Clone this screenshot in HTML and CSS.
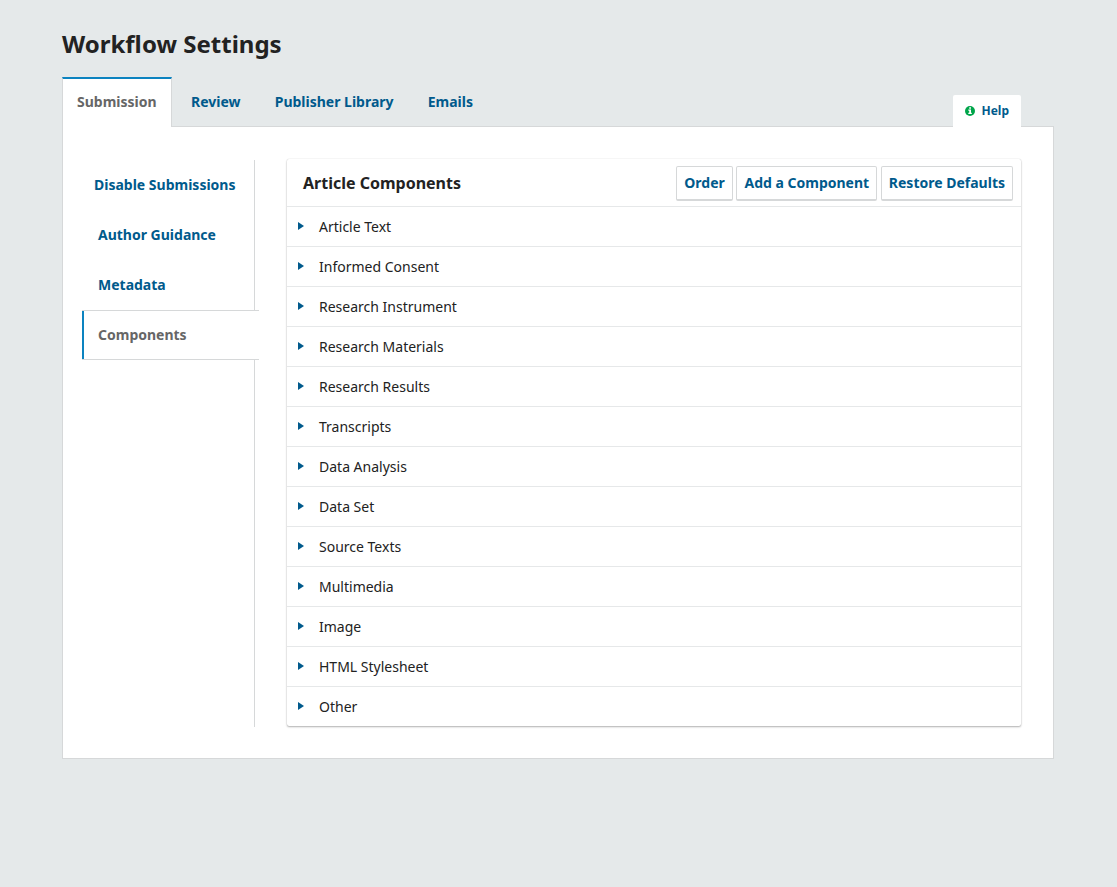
FILE: index.html
```html
<!DOCTYPE html>
<html lang="en">
<head>
<meta charset="utf-8">
<title>Workflow Settings</title>
<link rel="stylesheet" href="styles.css">
</head>
<body>
<main class="page">
  <h1 class="title">Workflow Settings</h1>
  <div class="bar">
    <nav class="tabs">
      <a class="tab tab-active">Submission</a>
      <a class="tab">Review</a>
      <a class="tab">Publisher Library</a>
      <a class="tab">Emails</a>
    </nav>
    <a class="help">
      <svg class="help-icon" viewBox="0 0 10 10"><circle cx="5" cy="5" r="5" fill="#00a54a"/><path d="M4.2 1.2h1.8v1.6H4.2zM3.3 3.6H6v3.2h.8v1.3H3.3V6.800h.9v-2h-.9z" fill="#fff"/></svg>
      <span>Help</span>
    </a>
  </div>
  <div class="panel">
    <nav class="side">
      <a class="side-item side-wide">Disable Submissions</a>
      <a class="side-item">Author Guidance</a>
      <a class="side-item">Metadata</a>
      <a class="side-item side-active">Components</a>
    </nav>
    <section class="card">
      <header class="card-head">
        <h2 class="card-title">Article Components</h2>
        <div class="actions">
          <button class="btn">Order</button>
          <button class="btn">Add a Component</button>
          <button class="btn">Restore Defaults</button>
        </div>
      </header>
      <div class="row"><i class="arrow"></i>Article Text</div>
      <div class="row"><i class="arrow"></i>Informed Consent</div>
      <div class="row"><i class="arrow"></i>Research Instrument</div>
      <div class="row"><i class="arrow"></i>Research Materials</div>
      <div class="row"><i class="arrow"></i>Research Results</div>
      <div class="row"><i class="arrow"></i>Transcripts</div>
      <div class="row"><i class="arrow"></i>Data Analysis</div>
      <div class="row"><i class="arrow"></i>Data Set</div>
      <div class="row"><i class="arrow"></i>Source Texts</div>
      <div class="row"><i class="arrow"></i>Multimedia</div>
      <div class="row"><i class="arrow"></i>Image</div>
      <div class="row"><i class="arrow"></i>HTML Stylesheet</div>
      <div class="row"><i class="arrow"></i>Other</div>
    </section>
  </div>
</main>
</body>
</html>
```

FILE: styles.css
```css
* { box-sizing: border-box; }
body {
  margin: 0;
  background: #e5e9ea;
  color: #222;
  font: 14px/20px "Noto Sans", sans-serif;
}
.page { width: 992px; margin-left: 62px; padding-top: 28px; }
.title { margin: 0; font-size: 24px; line-height: 32px; font-weight: 700; }
.bar {
  display: flex;
  justify-content: space-between;
  align-items: flex-end;
  height: 50px;
  margin-top: 17px;
  padding-right: 33px;
}
.tabs { display: flex; height: 50px; }
.tab {
  padding: 0 15px;
  margin-right: 4.1px;
  line-height: 50px;
  font-weight: 700;
  color: #005a8c;
}
.tab-active {
  position: relative;
  z-index: 1;
  width: 110px;
  padding: 0 14px;
  line-height: 46px;
  background: #fff;
  border: 1px solid #d6d8d9;
  border-top: 2px solid #0c83c0;
  border-bottom: 0;
  color: #666;
}
.help {
  position: relative;
  z-index: 1;
  display: flex;
  align-items: center;
  gap: 6.5px;
  width: 68px;
  height: 32px;
  padding-left: 12px;
  background: #fff;
  border-radius: 2px 2px 0 0;
  font-size: 12px;
  font-weight: 700;
  color: #005a8c;
}
.help-icon { width: 10px; height: 10px; }
.panel {
  display: flex;
  height: 633px;
  margin-top: -1px;
  padding: 32px 32px 0 19px;
  background: #fff;
  border: 1px solid #d6d8d9;
}
.side {
  width: 173px;
  height: 567px;
  margin-top: 1px;
  border-right: 1px solid #d6d8d9;
}
.side-item {
  display: block;
  height: 50px;
  padding-left: 16px;
  line-height: 50px;
  font-weight: 700;
  white-space: nowrap;
  color: #005a8c;
}
.side-wide { padding-left: 12px; }
.side-active {
  position: relative;
  width: 177px;
  background: #fff;
  border: solid #d6d8d9;
  border-width: 1px 0;
  line-height: 48px;
  color: #666;
}
.side-active::before {
  content: "";
  position: absolute;
  left: 0;
  top: 0;
  width: 2px;
  height: 48px;
  background: #0c83c0;
}
.card {
  width: 734px;
  height: 567px;
  margin-left: 32px;
  border-radius: 2px;
  box-shadow: 0 0 1px rgba(0, 0, 0, .2), 0 1px 2px rgba(0, 0, 0, .3);
}
.card-head {
  display: flex;
  justify-content: space-between;
  height: 47px;
  padding: 7px 8px 0 16px;
}
.card-title { margin: 0; font-size: 16px; line-height: 34px; font-weight: 700; }
.actions { display: flex; gap: 3.7px; }
.btn {
  height: 35px;
  padding: 0 7px;
  background: #fff;
  border: 1px solid #d6d8d9;
  border-bottom-width: 2px;
  border-radius: 2px;
  font: 700 14px/32px "Noto Sans", sans-serif;
  color: #005a8c;
}
.row {
  display: flex;
  align-items: center;
  height: 40px;
  border-top: 1px solid #e6e8e9;
  padding: 1px 0 0 11px;
}
.arrow {
  width: 0;
  height: 0;
  margin: -2px 15px 0 0;
  border-style: solid;
  border-width: 4px 0 4px 6px;
  border-color: transparent transparent transparent #005a8c;
}
```
